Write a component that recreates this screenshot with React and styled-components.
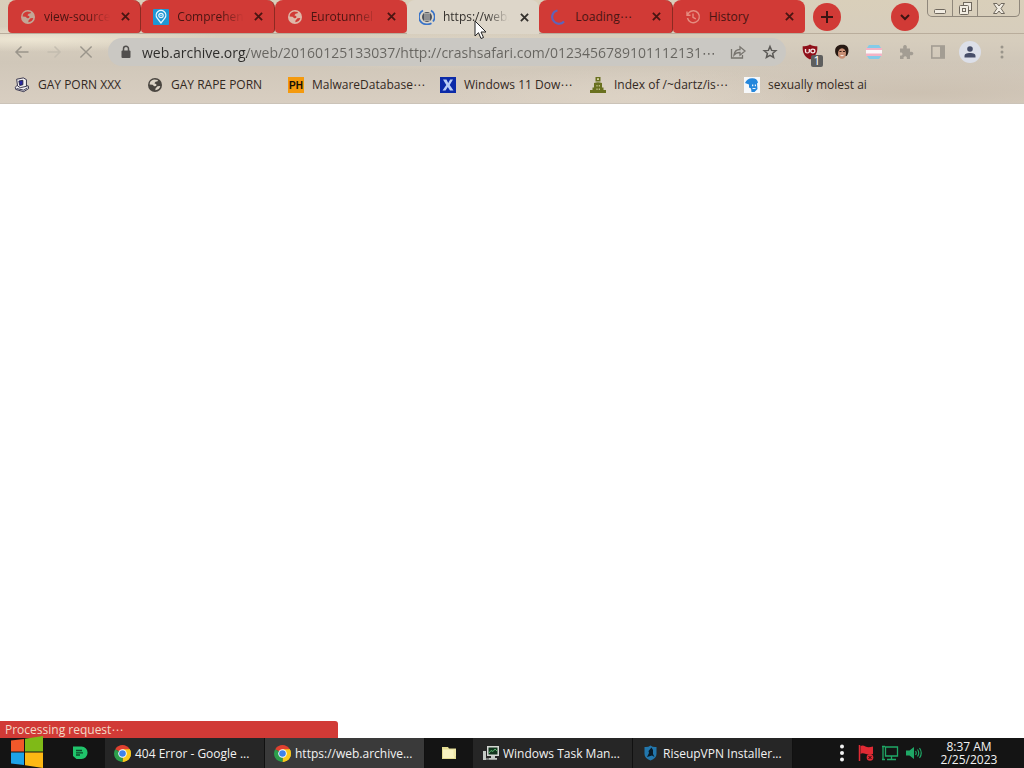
import React from 'react';
import styled, { createGlobalStyle, css } from 'styled-components';

const Global = createGlobalStyle`
  * { box-sizing: border-box; }
  body { margin: 0; font-family: 'Open Sans', 'DejaVu Sans', 'Noto Sans CJK KR', sans-serif; background: #fff; }
  button { border: 0; padding: 0; margin: 0; background: none; color: inherit; font: inherit; }
  a { color: inherit; text-decoration: none; }
  svg { display: block; flex: none; }
`;

const Desktop = styled.div`
  min-height: 100vh;
  display: flex;
  flex-direction: column;
`;

const Chrome = styled.header`
  background:
    radial-gradient(ellipse at 3% 38%, rgba(240, 233, 214, 0.9), transparent 14%),
    radial-gradient(ellipse at 44% 50%, rgba(228, 222, 208, 0.8), transparent 26%),
    radial-gradient(ellipse at 62% 95%, rgba(222, 212, 198, 0.8), transparent 22%),
    radial-gradient(ellipse at 90% 90%, rgba(200, 188, 172, 0.7), transparent 24%),
    linear-gradient(180deg, #d9cfba 0, #d6cdbd 40%, #d0c7b9 60%, #d8cec1 100%);
  border-bottom: 1px solid #cbc3b8;
`;

const TabStrip = styled.div`
  display: flex;
  height: 34px;
  padding: 0 4px 0 8px;
  border-bottom: 1px solid #b9ad9c;
`;

const Tabs = styled.div`
  display: flex;
  flex: 0 1 797px;
  min-width: 0;
`;

const Tab = styled.div`
  flex: 1 1 0;
  min-width: 0;
  display: flex;
  align-items: center;
  gap: 8px;
  padding: 0 8px 0 12px;
  height: ${(p) => (p.$active ? 34 : 33)}px;
  border-radius: 8px 8px ${(p) => (p.$active ? '0 0' : '4px 4px')};
  background: ${(p) => (p.$active ? '#ddd6c9' : '#d13a36')};
  color: ${(p) => (p.$active ? '#33302c' : '#4a1512')};
  ${(p) => p.$divided && css`border-right: 1px solid #8c2a22;`}
`;

const TabTitle = styled.span`
  flex: 1;
  min-width: 0;
  overflow: hidden;
  white-space: nowrap;
  font-size: 12px;
  line-height: 16px;
  mask-image: ${(p) => (p.$fade ? 'linear-gradient(90deg, #000 65%, transparent)' : 'none')};
`;

const TabClose = styled.button`
  display: grid;
  place-items: center;
  width: 14px;
  height: 16px;
`;

const RoundButton = styled.button`
  flex: none;
  display: grid;
  place-items: center;
  width: 28px;
  height: 28px;
  margin: 3px 0 0 8px;
  border-radius: 50%;
  background: #d13a36;
  color: #3c1412;
`;

const Spacer = styled.div`
  flex: 1;
`;

const WindowControls = styled.div`
  display: flex;
  flex: none;
  height: 17px;
  margin-left: 8px;
  border: 1px solid #8f877b;
  border-top: 0;
  border-radius: 0 0 5px 5px;
  color: #6f685e;
`;

const WindowButton = styled.button`
  display: grid;
  place-items: center;
  width: ${(p) => p.$width}px;
  & + & { border-left: 1px solid #8f877b; }
`;

const Toolbar = styled.div`
  display: flex;
  align-items: center;
  height: 36px;
  padding: 0 6px;
`;

const ToolButton = styled.button`
  position: relative;
  display: grid;
  place-items: center;
  width: 32px;
  height: 28px;
  color: ${(p) => p.$color || '#9a958b'};
`;

const AddressBar = styled.label`
  flex: 1;
  min-width: 0;
  display: flex;
  align-items: center;
  height: 28px;
  margin: 0 8px 0 6px;
  padding-left: 10px;
  border-radius: 14px;
  background: #cac8c3;
  color: #5c5a57;
`;

const AddressInput = styled.input`
  flex: 1;
  min-width: 0;
  height: 24px;
  margin-left: 8px;
  padding: 0;
  border: 0;
  outline: 0;
  font-family: inherit;
  font-size: 14px;
  color: transparent;
  background: linear-gradient(90deg, #2c2b29 105px, #66645f 105px);
  background-clip: text;
`;

const Badge = styled.span`
  position: absolute;
  right: 3px;
  bottom: -1px;
  width: 12px;
  height: 12px;
  border-radius: 2px;
  background: #5e5e5e;
  color: #fff;
  font-size: 12px;
  line-height: 12px;
  text-align: center;
`;

const Avatar = styled.span`
  display: grid;
  place-items: center;
  width: 22px;
  height: 22px;
  border-radius: 50%;
  background: #dcdfe8;
`;

const Bookmarks = styled.nav`
  display: flex;
  align-items: center;
  gap: 16px;
  height: 33px;
  padding: 0 14px 4px;
  font-size: 12px;
  line-height: 16px;
  color: #33291f;
`;

const Bookmark = styled.a`
  display: flex;
  align-items: center;
  gap: 8px;
  width: ${(p) => p.$width}px;
  white-space: nowrap;
`;

const Page = styled.main`
  position: relative;
  flex: 1;
  background: #fff;
`;

const StatusBubble = styled.div`
  position: absolute;
  left: 0;
  bottom: 0;
  width: 33%;
  height: 17px;
  padding-left: 5px;
  border-radius: 0 3px 0 0;
  background: #d13a36;
  color: #f3d9c6;
  font-size: 12px;
  line-height: 17px;
`;

const Taskbar = styled.footer`
  display: flex;
  align-items: stretch;
  height: 30px;
  background: #141414;
  color: #f2f2f2;
  font-size: 12px;
`;

const StartButton = styled.button`
  position: relative;
  display: grid;
  place-items: center;
  width: 54px;
  svg { margin-top: -3px; }
`;

const PinButton = styled.button`
  display: grid;
  place-items: center;
  width: ${(p) => p.$width}px;
`;

const TaskButton = styled.button`
  flex: 0 1 160px;
  min-width: 0;
  display: flex;
  align-items: center;
  gap: 4px;
  padding: 0 4px 0 9px;
  border-right: 1px solid #111;
  background: ${(p) => (p.$active ? '#3a3a3a' : '#262626')};
  white-space: nowrap;
`;

const Tray = styled.div`
  display: flex;
  align-items: center;
  gap: 6px;
  margin-right: 16px;
`;

const TrayButton = styled.button`
  display: grid;
  place-items: center;
  width: 18px;
  height: 24px;
`;

const Clock = styled.time`
  width: 60px;
  margin-right: 25px;
  padding-top: 2px;
  line-height: 13px;
  text-align: center;
`;

const Pointer = styled.svg`
  position: absolute;
  left: 474px;
  top: 20px;
  pointer-events: none;
`;

const Cross = ({ size = 9, width = 2 }) => (
  <svg width={size} height={size} viewBox="0 0 10 10" stroke="currentColor" strokeWidth={width}>
    <path d="M1 1l8 8M9 1L1 9" />
  </svg>
);

const Globe = ({ bg = '#4a4640', fg = '#dbd3c6' }) => (
  <svg width="16" height="16" viewBox="0 0 16 16">
    <circle cx="8" cy="8" r="7" fill={bg} />
    <path d="M7 2.500C4 3 2.600 5.200 2.600 7.600l3 .2 1.600 1.400 2-.3.2-1.700-2-.9 1.200-1.500 2-.6.3-1.300zM8.500 11.500l2-2.200 2.800-.3C12.800 11.500 11 13 8.300 13.300z" fill={fg} />
  </svg>
);

const PinFavicon = () => (
  <svg width="16" height="16" viewBox="0 0 16 16">
    <rect width="16" height="16" rx="1" fill="#1e97d4" />
    <path d="M8 14L4.200 9.200a4.800 4.800 0 1 1 7.600 0z" fill="none" stroke="#e6f6ff" strokeWidth="1.300" />
    <circle cx="8" cy="6.500" r="2.200" fill="none" stroke="#e6f6ff" strokeWidth="1.200" />
    <circle cx="8" cy="6.500" r=".7" fill="#e6f6ff" />
  </svg>
);

const ArchiveFavicon = () => (
  <svg width="16" height="16" viewBox="0 0 16 16">
    <path d="M4 1.500A7.300 7.300 0 0 0 3.500 14.200Q8 16.500 12.500 14.200M12 1.500A7.300 7.300 0 0 1 14 12.500" fill="none" stroke="#3973c8" strokeWidth="1.700" />
    <circle cx="8" cy="8" r="5" fill="#4c515b" />
    <path d="M6 5.500v5M8 5.500v5M10 5.500v5M5 4.800h6M5 11.200h6" stroke="#dfdbd2" strokeWidth=".9" />
  </svg>
);

const Spinner = () => (
  <svg width="16" height="16" viewBox="0 0 16 16">
    <path d="M6.500 1.500A6.600 6.600 0 0 0 3.500 13a6.600 6.600 0 0 0 9.500-.5" fill="none" stroke="#5f63b8" strokeWidth="2.200" />
  </svg>
);

const HistoryIcon = () => (
  <svg width="16" height="16" viewBox="0 0 16 16" fill="none" stroke="#e58d80" strokeWidth="1.400">
    <path d="M2.500 9A6 6 0 1 0 4 3.600L2.200 6M2 2.500V6.300h3.500M8 4.500V8.300l2.800 1.600" />
  </svg>
);

const PcIcon = () => (
  <svg width="16" height="16" viewBox="0 0 18 18" stroke="#282540" strokeWidth="1">
    <path d="M1.500 11.500L4 9l12 1 .5 3-5.500 3.500-9-2.500z" fill="#f0eef0" />
    <path d="M3 2.500L10.500 1 14 3v7.500L7 12 4 10z" fill="#f0eef0" />
    <path d="M5.500 4.500l4.500-.8v5l-3.500.8z" fill="#2928a3" />
    <path d="M3 13l8 1.800 4-2.600" fill="none" />
  </svg>
);

const PhIcon = () => (
  <svg width="16" height="16" viewBox="0 0 16 16">
    <rect width="16" height="16" fill="#f49a0e" />
    <text x="8" y="12" textAnchor="middle" fontFamily="Liberation Sans" fontWeight="700" fontSize="10" fill="#171005">PH</text>
  </svg>
);

const XIcon = () => (
  <svg width="16" height="16" viewBox="0 0 16 16">
    <rect width="16" height="16" fill="#0b2aa8" />
    <path d="M3 2.500h3.500L8.200 6l2-3.500H13L9.700 8l3.800 5.500H10L7.800 10l-2.300 3.500h-3L6.300 8z" fill="#b9cdf5" />
  </svg>
);

const DartzIcon = () => (
  <svg width="16" height="16" viewBox="0 0 16 16" fill="#69701f">
    <path d="M5.500 0h5v4.500h-5zM4 6q4-1.500 8 0v4.500h1.500V13H16v3H0v-3h2.500v-2.500H4z" />
    <path d="M7 1.300h2V3H7zM6.500 8h1v1.500h-1zM8.800 8h1v1.500h-1zM6.500 11.500h1V13h-1zM8.800 11.500h1V13h-1z" fill="#d5d2a0" />
  </svg>
);

const BlueHatIcon = () => (
  <svg width="16" height="16" viewBox="0 0 16 16">
    <rect width="16" height="16" fill="#f6f8fa" />
    <path d="M1 6C2.500 3 5 1 8.500 1.200c3 0 5 1.500 5.500 4.300l-1 1 .5 5.500-3 3H7.500L7 11.500l-2-1V7.500z" fill="#2487dc" />
    <path d="M8 7.500h1.300v1.800H8zM10.800 7.500H12v1.800h-1.200zM8.500 11h3v1h-3z" fill="#e9f4fd" />
  </svg>
);

const BackIcon = ({ flip }) => (
  <svg width="16" height="16" viewBox="0 0 16 16" fill="none" stroke="currentColor" strokeWidth="1.500">
    <path d={flip ? 'M1.500 8H14M8.500 2.500L14 8l-5.500 5.500' : 'M14.500 8H2M7.500 2.500L2 8l5.500 5.500'} />
  </svg>
);

const LockIcon = () => (
  <svg width="16" height="16" viewBox="0 0 16 16">
    <rect x="3.500" y="6.500" width="9" height="7.500" rx="1" fill="#514f4d" />
    <path d="M5.500 7V4.800a2.500 2.500 0 0 1 5 0V7" fill="none" stroke="#514f4d" strokeWidth="1.500" />
  </svg>
);

const ShareIcon = () => (
  <svg width="18" height="16" viewBox="0 0 18 16" fill="none" stroke="currentColor" strokeWidth="1.300">
    <path d="M2.500 5v9h11v-3M5 11c.5-4 2.500-5.500 6-5.500V2.800L16 7l-5 4.200V8.500C8.500 8.500 6.500 9 5 11z" />
  </svg>
);

const StarIcon = () => (
  <svg width="16" height="16" viewBox="0 0 16 16" fill="none" stroke="currentColor" strokeWidth="1.500">
    <path d="M8 2.500l1.600 3.900 4.200.3-3.200 2.700 1 4.100L8 11.300l-3.600 2.200 1-4.100-3.200-2.700 4.200-.3z" />
  </svg>
);

const ShieldIcon = () => (
  <svg width="18" height="16" viewBox="0 0 16 16" preserveAspectRatio="none">
    <path d="M8 .5C10 2 13 2.300 14.500 2.300 14.800 8 13.500 12.500 8 15.500 2.500 12.500 1.200 8 1.500 2.300 3 2.300 6 2 8 .5z" fill="#8f0f19" />
    <path d="M4 5v2.500q0 1.500 1.700 1.500T7.400 7.500V5" fill="none" stroke="#f6e4e4" strokeWidth="1.200" />
    <circle cx="10.500" cy="7" r="1.800" fill="none" stroke="#f6e4e4" strokeWidth="1.200" />
  </svg>
);

const FaceIcon = () => (
  <svg width="16" height="16" viewBox="0 0 16 16">
    <path d="M8 .8c4.500-.3 6.800 2.500 6.500 6.200-.2 2.500-1 4-2 5L4 12.500C1.500 11 .8 8.500 1.200 5.500 1.700 2.500 4.500.8 8 .8z" fill="#271913" />
    <ellipse cx="8" cy="9.500" rx="4" ry="5.300" fill="#c98f74" />
    <path d="M5.500 7.500h2M9 7.500h2" stroke="#3a1f15" />
    <path d="M6 11.300q2 2 4 0z" fill="#fff" />
  </svg>
);

const StripesIcon = () => (
  <svg width="16" height="16" viewBox="0 0 16 16">
    <path d="M3 1h10l2 3H1z" fill="#84cbe8" />
    <path d="M0 4h16v3H0z" fill="#f3b3c5" />
    <path d="M0 6h16v4H0z" fill="#fbf7f8" />
    <path d="M0 9.500h16V12H0z" fill="#f3b3c5" />
    <path d="M1 12h14l-2 3H3z" fill="#84cbe8" />
  </svg>
);

const PuzzleIcon = () => (
  <svg width="16" height="16" viewBox="0 0 16 16">
    <path d="M2 4.500h3.300C4.700 2.500 5.500 1 7 1s2.300 1.500 1.700 3.500H12V8c2-.6 3.300.2 3.300 1.600S14 11.700 12 11.200V15H8.800c.4-1.800-.3-2.700-1.600-2.700S5.200 13.200 5.600 15H2v-3.400c1.700.3 2.500-.4 2.500-1.600S3.700 8.300 2 8.600z" fill="#a39d93" />
  </svg>
);

const PanelIcon = () => (
  <svg width="16" height="16" viewBox="0 0 16 16">
    <rect x="1.800" y="2" width="12.400" height="12" fill="none" stroke="#a39d93" strokeWidth="1.600" />
    <path d="M10 2h4v12h-4z" fill="#a39d93" />
  </svg>
);

const PersonIcon = () => (
  <svg width="14" height="14" viewBox="0 0 14 14" fill="#464d68">
    <circle cx="7" cy="4" r="2.800" />
    <path d="M1.500 12.500V11C1.500 8.800 4 8 7 8s5.500.8 5.500 3v1.500z" />
  </svg>
);

const DotsIcon = ({ size = 16, r = 1.5 }) => (
  <svg width="8" height={size} viewBox={`0 0 8 ${size}`} fill="currentColor">
    <circle cx="4" cy={size / 2 - r * 3.3} r={r} />
    <circle cx="4" cy={size / 2} r={r} />
    <circle cx="4" cy={size / 2 + r * 3.3} r={r} />
  </svg>
);

const WindowsLogo = () => (
  <svg width="34" height="32" viewBox="0 0 34 32">
    <path d="M1 4.500L14 3v12.500H1z" fill="#f1582a" />
    <path d="M15 2.800L33 0v15.500H15z" fill="#7fba17" />
    <path d="M1 16.500h13V29L1 27.500z" fill="#1ea3e8" />
    <path d="M15 16.500h18V32l-18-2.800z" fill="#fdb813" />
  </svg>
);

const GreenNoteIcon = () => (
  <svg width="16" height="16" viewBox="0 0 16 16">
    <path d="M1 1.500h8.500a6 6 0 0 1 6 6.500 6 6 0 0 1-6 6H4.500L1 11z" fill="#20c46b" />
    <path d="M4 5.500h6M4 7.800h7M4 10h4" stroke="#0b4a29" strokeWidth="1.300" />
  </svg>
);

const ChromeIcon = () => (
  <svg width="17" height="17" viewBox="0 0 16 16">
    <path d="M8 8L1.100 4A8 8 0 0 1 14.900 4z" fill="#e0402f" />
    <path d="M8 8L14.900 4A8 8 0 0 1 8 16z" fill="#f8c81c" />
    <path d="M8 8v8A8 8 0 0 1 1.100 4z" fill="#2c9e4b" />
    <path d="M8 4h6.900A8 8 0 0 1 8 16l3.500-6z" fill="#f8c81c" />
    <circle cx="8" cy="8" r="4" fill="#fff" />
    <circle cx="8" cy="8" r="3.100" fill="#3f82ea" />
  </svg>
);

const FolderIcon = () => (
  <svg width="14" height="14" viewBox="0 0 14 14">
    <path d="M0 1h6l1 1.500h7V13H0z" fill="#e4dc92" />
    <path d="M1 3.500h11.500V12H1z" fill="#f8f2c2" />
    <path d="M11.500 3H14v7h-2.500z" fill="#efe7a8" />
  </svg>
);

const TaskManagerIcon = () => (
  <svg width="17" height="16" viewBox="0 0 17 16">
    <path d="M5 1h12v10H5z" fill="#d4d7d3" />
    <path d="M6.500 2.500h9v7h-9z" fill="#12351e" />
    <path d="M7 8l2-2.500 2 1L13 4l2 2" fill="none" stroke="#58b36c" />
    <path d="M9 11h4v2h2v1.500H7V13h2zM1 6h3v9H1z" fill="#c3c8c4" />
    <path d="M4 14h11" stroke="#c3c8c4" />
  </svg>
);

const VpnIcon = () => (
  <svg width="17" height="16" viewBox="-2 0 17 16">
    <path d="M.5 2Q4 2.500 6.500.5 9 2.500 12.500 2v7q0 4-6 6.500Q.5 13 .5 9z" fill="#2277ad" />
    <path d="M3 12l2-4-.5-2L7.500 2.500 9 5v4l1.500 3L8 10.500z" fill="#0a1a26" />
  </svg>
);

const FlagIcon = () => (
  <svg width="18" height="18" viewBox="0 0 18 18">
    <path d="M2.500 1v16" stroke="#e02a34" strokeWidth="1.500" />
    <path d="M3.500 2Q6 1 8.500 2.500T16 2.500V10Q13 11.500 9 10t-5.500 0z" fill="#e02a34" />
    <circle cx="13" cy="13.500" r="3.300" fill="#e02a34" />
    <path d="M11.500 12l3 3M14.500 12l-3 3" stroke="#2a0a0c" />
  </svg>
);

const NetworkIcon = () => (
  <svg width="18" height="18" viewBox="0 0 18 18" fill="none" stroke="#1fa866" strokeWidth="1.300">
    <path d="M4.500 3h12v9h-12zM10.500 12v3M6 15.500h9M2 2v13.500M1 2.500h3M1 15.500h3" />
  </svg>
);

const VolumeIcon = () => (
  <svg width="18" height="18" viewBox="0 0 18 18">
    <path d="M1 6.500h3.500L9 3v12l-4.500-3.500H1z" fill="#1fa866" />
    <path d="M10.500 7q1.500 2 0 4M12.500 5.500q2.500 3.500 0 7M14.500 4q3.500 5 0 10" fill="none" stroke="#1fa866" strokeWidth="1.200" />
  </svg>
);

const TABS = [
  { title: 'view-source', icon: <Globe bg="#c3a696" fg="#d13a36" />, fade: true, divided: true },
  { title: 'Comprehen', icon: <PinFavicon />, fade: true, divided: true },
  { title: 'Eurotunnel E', icon: <Globe bg="#dfb7a8" fg="#d13a36" />, fade: true },
  { title: 'https://web.', icon: <ArchiveFavicon />, fade: true, active: true },
  { title: 'Loading⋯', icon: <Spinner />, divided: true },
  { title: 'History', icon: <HistoryIcon /> },
];

const BOOKMARKS = [
  { title: 'GAY PORN XXX', icon: <PcIcon />, width: 117 },
  { title: 'GAY RAPE PORN', icon: <Globe />, width: 125 },
  { title: 'MalwareDatabase⋯', icon: <PhIcon />, width: 136 },
  { title: 'Windows 11 Dow⋯', icon: <XIcon />, width: 134 },
  { title: 'Index of /~dartz/is⋯', icon: <DartzIcon />, width: 138 },
  { title: 'sexually molest ai', icon: <BlueHatIcon />, width: 122 },
];

export default function App() {
  return (
    <Desktop>
      <Global />
      <Chrome>
        <TabStrip>
          <Tabs role="tablist">
            {TABS.map((t) => (
              <Tab key={t.title} role="tab" aria-selected={!!t.active} $active={t.active} $divided={t.divided}>
                {t.icon}
                <TabTitle $fade={t.fade}>{t.title}</TabTitle>
                <TabClose aria-label="Close tab"><Cross /></TabClose>
              </Tab>
            ))}
          </Tabs>
          <RoundButton aria-label="New tab">
            <svg width="14" height="14" viewBox="0 0 14 14" stroke="currentColor" strokeWidth="2"><path d="M7 1v12M1 7h12" /></svg>
          </RoundButton>
          <Spacer />
          <RoundButton aria-label="Search tabs">
            <svg width="10" height="10" viewBox="0 0 10 10" fill="none" stroke="currentColor" strokeWidth="2"><path d="M1 3l4 4 4-4" /></svg>
          </RoundButton>
          <WindowControls>
            <WindowButton $width={24} aria-label="Minimize">
              <svg width="12" height="14" viewBox="0 0 12 14"><rect x=".5" y="8.500" width="11" height="4" rx="1" fill="#f1ece2" stroke="currentColor" /></svg>
            </WindowButton>
            <WindowButton $width={25} aria-label="Restore">
              <svg width="13" height="13" viewBox="0 0 13 13" fill="#f1ece2" stroke="currentColor"><rect x="4.500" y=".5" width="8" height="8" /><rect x=".5" y="3.500" width="9" height="9" rx="1" /><rect x="3.500" y="6.500" width="3" height="3" /></svg>
            </WindowButton>
            <WindowButton $width={42} aria-label="Close">
              <svg width="12" height="11" viewBox="0 0 12 11" fill="#f1ece2" stroke="currentColor"><path d="M.5.500h3.500L6 3 8 .500h3.500L8 5.500l3.500 5H8L6 8l-2 2.500H.5L4 5.500z" /></svg>
            </WindowButton>
          </WindowControls>
        </TabStrip>
        <Toolbar>
          <ToolButton aria-label="Back"><BackIcon /></ToolButton>
          <ToolButton aria-label="Forward" $color="#c4bdb0"><BackIcon flip /></ToolButton>
          <ToolButton aria-label="Stop"><Cross size={14} width={1} /></ToolButton>
          <AddressBar>
            <LockIcon />
            <AddressInput
              aria-label="Address"
              readOnly
              value="web.archive.org/web/20160125133037/http://crashsafari.com/0123456789101112131⋯"
            />
            <ToolButton aria-label="Share" $color="#77746e"><ShareIcon /></ToolButton>
            <ToolButton aria-label="Bookmark" $color="#5c5a57"><StarIcon /></ToolButton>
          </AddressBar>
          <ToolButton aria-label="Ad blocker"><ShieldIcon /><Badge>1</Badge></ToolButton>
          <ToolButton aria-label="Face extension"><FaceIcon /></ToolButton>
          <ToolButton aria-label="Stripes extension"><StripesIcon /></ToolButton>
          <ToolButton aria-label="Extensions"><PuzzleIcon /></ToolButton>
          <ToolButton aria-label="Side panel"><PanelIcon /></ToolButton>
          <ToolButton aria-label="Profile"><Avatar><PersonIcon /></Avatar></ToolButton>
          <ToolButton aria-label="Menu"><DotsIcon /></ToolButton>
        </Toolbar>
        <Bookmarks>
          {BOOKMARKS.map((b) => (
            <Bookmark key={b.title} href="#" $width={b.width}>{b.icon}{b.title}</Bookmark>
          ))}
        </Bookmarks>
      </Chrome>
      <Page>
        <StatusBubble>Processing request⋯</StatusBubble>
      </Page>
      <Taskbar>
        <StartButton aria-label="Start"><WindowsLogo /></StartButton>
        <PinButton $width={51} aria-label="Notes"><GreenNoteIcon /></PinButton>
        <TaskButton><ChromeIcon />404 Error - Google ...</TaskButton>
        <TaskButton $active><ChromeIcon />https://web.archive...</TaskButton>
        <PinButton $width={48} aria-label="Files"><FolderIcon /></PinButton>
        <TaskButton><TaskManagerIcon />Windows Task Man...</TaskButton>
        <TaskButton><VpnIcon />RiseupVPN Installer...</TaskButton>
        <Spacer />
        <Tray>
          <TrayButton aria-label="Show hidden icons"><DotsIcon size={18} r={2} /></TrayButton>
          <TrayButton aria-label="Action center"><FlagIcon /></TrayButton>
          <TrayButton aria-label="Network"><NetworkIcon /></TrayButton>
          <TrayButton aria-label="Volume"><VolumeIcon /></TrayButton>
        </Tray>
        <Clock>8:37 AM<br />2/25/2023</Clock>
      </Taskbar>
      <Pointer width="13" height="20" viewBox="0 0 13 20">
        <path d="M1 1v15l3.500-3.300L7 18.500l2.500-1L7 12h5z" fill="#fff" stroke="#222" />
      </Pointer>
    </Desktop>
  );
}
